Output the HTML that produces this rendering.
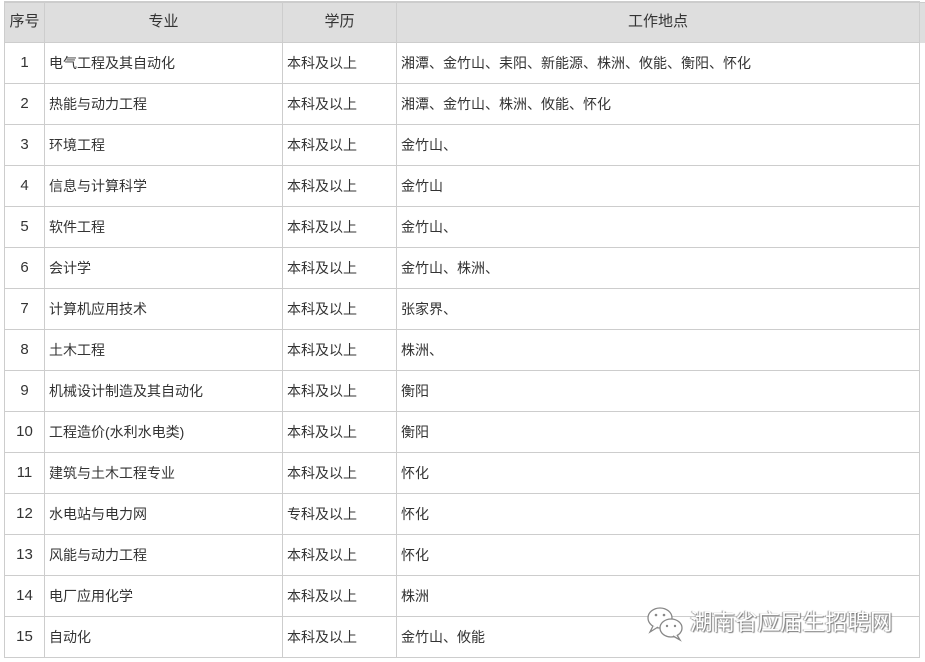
<!DOCTYPE html>
<html><head><meta charset="utf-8"><style>
body{margin:0;width:925px;height:662px;background:#fff;position:relative;overflow:hidden;font-family:"Liberation Sans","Noto Sans CJK SC",sans-serif;font-size:14px;color:#333}
.hd{position:absolute;left:4px;top:2px;width:921px;height:40px;background:#dedede;border-top:1px solid #ccc}
table{position:absolute;left:4px;top:1px;border-collapse:collapse;table-layout:fixed}
td,th{border:1px solid #cdcdcd;height:40px;padding:0;line-height:40px;white-space:nowrap;overflow:hidden}
th{font-weight:normal;font-size:15px;text-align:center;color:#333}
td.n{text-align:center;font-size:15px}
td.l{padding-left:4px}
.wm{position:absolute;left:690px;top:605px;font-size:22.5px;color:#fff;text-shadow:1px 1px 1px #777,-1px 0 1px #999}
</style></head><body>
<div class="hd"></div>
<table>
<colgroup><col style="width:40px"><col style="width:238px"><col style="width:114px"><col style="width:523px"></colgroup>
<tr><th>序号</th><th>专业</th><th>学历</th><th>工作地点</th></tr>
<tr><td class="n">1</td><td class="l">电气工程及其自动化</td><td class="l">本科及以上</td><td class="l">湘潭、金竹山、耒阳、新能源、株洲、攸能、衡阳、怀化</td></tr>
<tr><td class="n">2</td><td class="l">热能与动力工程</td><td class="l">本科及以上</td><td class="l">湘潭、金竹山、株洲、攸能、怀化</td></tr>
<tr><td class="n">3</td><td class="l">环境工程</td><td class="l">本科及以上</td><td class="l">金竹山、</td></tr>
<tr><td class="n">4</td><td class="l">信息与计算科学</td><td class="l">本科及以上</td><td class="l">金竹山</td></tr>
<tr><td class="n">5</td><td class="l">软件工程</td><td class="l">本科及以上</td><td class="l">金竹山、</td></tr>
<tr><td class="n">6</td><td class="l">会计学</td><td class="l">本科及以上</td><td class="l">金竹山、株洲、</td></tr>
<tr><td class="n">7</td><td class="l">计算机应用技术</td><td class="l">本科及以上</td><td class="l">张家界、</td></tr>
<tr><td class="n">8</td><td class="l">土木工程</td><td class="l">本科及以上</td><td class="l">株洲、</td></tr>
<tr><td class="n">9</td><td class="l">机械设计制造及其自动化</td><td class="l">本科及以上</td><td class="l">衡阳</td></tr>
<tr><td class="n">10</td><td class="l">工程造价(水利水电类)</td><td class="l">本科及以上</td><td class="l">衡阳</td></tr>
<tr><td class="n">11</td><td class="l">建筑与土木工程专业</td><td class="l">本科及以上</td><td class="l">怀化</td></tr>
<tr><td class="n">12</td><td class="l">水电站与电力网</td><td class="l">专科及以上</td><td class="l">怀化</td></tr>
<tr><td class="n">13</td><td class="l">风能与动力工程</td><td class="l">本科及以上</td><td class="l">怀化</td></tr>
<tr><td class="n">14</td><td class="l">电厂应用化学</td><td class="l">本科及以上</td><td class="l">株洲</td></tr>
<tr><td class="n">15</td><td class="l">自动化</td><td class="l">本科及以上</td><td class="l">金竹山、攸能</td></tr>
</table>
<svg style="position:absolute;left:645px;top:604px" width="42" height="40" viewBox="0 0 42 40">
<g fill="#fff" stroke="#888" stroke-width="1.3">
<ellipse cx="15" cy="14" rx="12" ry="10"/>
<path d="M8 22 L5 28 L13 23"/>
<ellipse cx="26" cy="24" rx="11" ry="9"/>
<path d="M32 31 L35 36 L28 32"/>
</g>
<g fill="#888"><circle cx="11" cy="11" r="1.3"/><circle cx="19" cy="11" r="1.3"/><circle cx="22" cy="22" r="1.2"/><circle cx="30" cy="22" r="1.2"/></g>
</svg>
<div class="wm">湖南省应届生招聘网</div>
</body></html>
